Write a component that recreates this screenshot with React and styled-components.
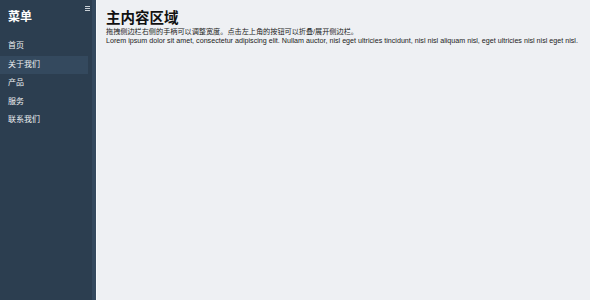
import React from 'react'
import styled, {createGlobalStyle} from 'styled-components'

const Global = createGlobalStyle`
  html, body { margin: 0; padding: 0; height: 100%; }
  body { font-family: "Liberation Sans", "Noto Sans CJK SC", Arial, sans-serif; background: #eef0f3; }
  #root { height: 100%; }
`

const Layout = styled.div`
  display: flex;
  height: 300px;
  width: 590px;
`

const Sidebar = styled.aside`
  display: flex;
  width: 97px;
  flex-shrink: 0;
  background: #2c3e50;
  color: #ecf0f1;
`

const SideInner = styled.div`
  flex: 1;
  display: flex;
  flex-direction: column;
`

const SideHead = styled.div`
  display: flex;
  justify-content: space-between;
  align-items: flex-start;
  height: 37px;
  padding-left: 8px;
`

const Title = styled.h2`
  margin: 11px 0 0;
  font-size: 12px;
  line-height: 13px;
  font-weight: bold;
  color: #fff;
`

const Toggle = styled.button`
  border: 0;
  background: none;
  padding: 0;
  margin: 6px 2px 0 0;
  width: 5px;
  display: flex;
  flex-direction: column;
  gap: 1px;
  cursor: pointer;
  span {
    display: block;
    height: 1px;
    background: #c9d0d6;
  }
`

const Menu = styled.ul`
  list-style: none;
  margin: 0;
  padding: 0;
  width: 88px;
`

const Item = styled.li`
  height: 18.6px;
  line-height: 18.6px;
  padding-left: 8px;
  font-size: 8px;
  color: #ecf0f1;
  background: ${p => p.$active ? '#34495e' : 'transparent'};
`

const Handle = styled.div`
  width: 4px;
  background: #34495e;
  border-right: 1px solid #f6f8fa;
  cursor: col-resize;
`

const Main = styled.main`
  flex: 1;
  padding: 10px 9px;
  color: #222;
  background: #eef0f3;
`

const Heading = styled.h1`
  margin: 0 0 1px;
  font-size: 14.5px;
  line-height: 17px;
  font-weight: bold;
  color: #111;
`

const Text = styled.p`
  margin: 0;
  font-size: 7.15px;
  line-height: 8.5px;
`

const items = ['首页', '关于我们', '产品', '服务', '联系我们']

export default function App() {
  return <>
    <Global />
    <Layout>
      <Sidebar>
        <SideInner>
          <SideHead>
            <Title>菜单</Title>
            <Toggle aria-label="toggle"><span /><span /><span /></Toggle>
          </SideHead>
          <Menu>
            {items.map((t, i) => <Item key={t} $active={i === 1}>{t}</Item>)}
          </Menu>
        </SideInner>
        <Handle />
      </Sidebar>
      <Main>
        <Heading>主内容区域</Heading>
        <Text>拖拽侧边栏右侧的手柄可以调整宽度。点击左上角的按钮可以折叠/展开侧边栏。</Text>
        <Text>Lorem ipsum dolor sit amet, consectetur adipiscing elit. Nullam auctor, nisl eget ultricies tincidunt, nisl nisl aliquam nisl, eget ultricies nisl nisl eget nisl.</Text>
      </Main>
    </Layout>
  </>
}
